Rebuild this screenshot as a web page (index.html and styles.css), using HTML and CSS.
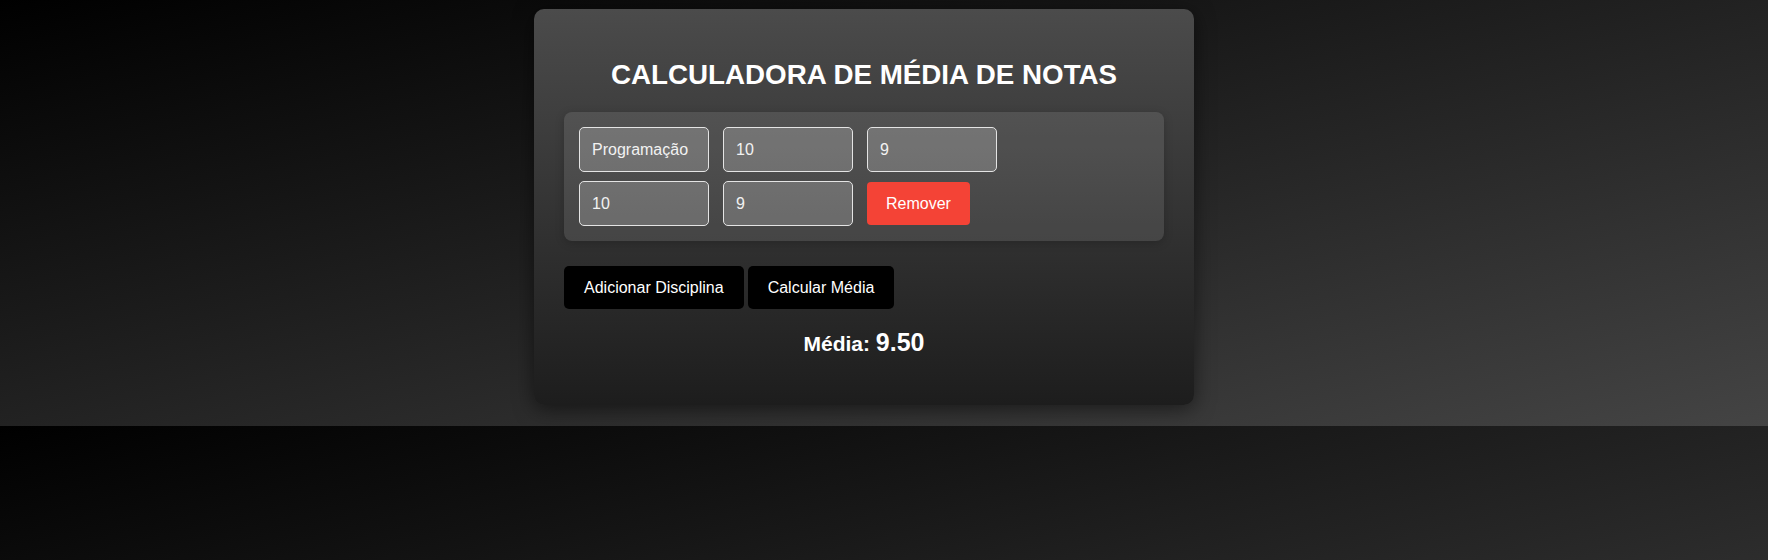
FILE: index.html
```html
<!DOCTYPE html>
<html lang="pt-BR">
<head>
<meta charset="utf-8">
<title>Calculadora de Média de Notas</title>
<link rel="stylesheet" href="styles.css">
</head>
<body>
  <div class="card">
    <h1 class="title">CALCULADORA DE MÉDIA DE NOTAS</h1>
    <div class="subjects">
      <div class="subject">
        <input class="field" type="text" value="Programação">
        <input class="field" type="text" value="10">
        <input class="field" type="text" value="9">
        <input class="field" type="text" value="10">
        <input class="field" type="text" value="9">
        <button class="btn-remove" type="button">Remover</button>
      </div>
    </div>
    <div class="actions">
      <button class="btn" type="button">Adicionar Disciplina</button>
      <button class="btn" type="button">Calcular Média</button>
    </div>
    <p class="result">Média: <span class="result-value">9.50</span></p>
  </div>
</body>
</html>
```
FILE: styles.css
```css
html {
  margin: 0;
}

body {
  margin: 0;
  padding: 9px 40px 21px 0;
  background: linear-gradient(to bottom right, #000000, #444444);
  font-family: "Liberation Sans", Arial, sans-serif;
  color: #ffffff;
  display: flex;
  justify-content: center;
}

.card {
  width: 600px;
  padding: 30px 30px 48px;
  border-radius: 10px;
  background: linear-gradient(to bottom, #4b4b4b, #1d1d1d);
  box-shadow: 0 4px 20px rgba(0, 0, 0, 0.5);
}

.title {
  margin: 20px 0 21px;
  font-size: 27.75px;
  line-height: 32px;
  font-weight: bold;
  text-align: center;
  color: #ffffff;
}

.subjects {
  padding: 15px;
  border-radius: 8px;
  background: rgba(255, 255, 255, 0.1);
  box-shadow: 0 2px 10px rgba(0, 0, 0, 0.2);
}

.subject {
  display: grid;
  grid-template-columns: repeat(3, 130px);
  column-gap: 14px;
  row-gap: 9px;
  align-items: center;
}

.field {
  box-sizing: border-box;
  width: 130px;
  height: 45px;
  margin: 0;
  padding: 0 12px;
  border: 1px solid #e4e4e4;
  border-radius: 5px;
  background: rgba(255, 255, 255, 0.2);
  color: #f2f2f2;
  font-family: "Liberation Sans", Arial, sans-serif;
  font-size: 16px;
  outline: none;
}

.btn-remove {
  justify-self: start;
  height: 43px;
  padding: 0 19px;
  border: none;
  border-radius: 4px;
  background: #f44336;
  color: #ffffff;
  font-family: "Liberation Sans", Arial, sans-serif;
  font-size: 16px;
}

.actions {
  display: flex;
  gap: 4px;
  margin-top: 25px;
}

.btn {
  height: 43px;
  padding: 0 20px;
  border: none;
  border-radius: 5px;
  background: #000000;
  color: #ffffff;
  font-family: "Liberation Sans", Arial, sans-serif;
  font-size: 16px;
}

.result {
  margin: 20px 0 0;
  text-align: center;
  font-size: 21px;
  line-height: 26px;
  font-weight: bold;
}

.result-value {
  font-size: 25px;
}
```
